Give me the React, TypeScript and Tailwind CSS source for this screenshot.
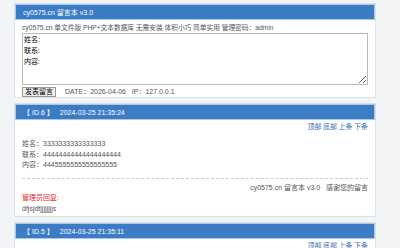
const FONT = { fontFamily: '"Liberation Sans", "Noto Sans CJK SC", sans-serif' }

type Entry = {
  id: number
  time: string
  name?: string
  contact?: string
  content?: string
  reply?: string
}

const entries: Entry[] = [
  {
    id: 6,
    time: '2024-03-25 21:35:24',
    name: '3333333333333333',
    contact: '44444444444444444444',
    content: '4445555555555555555',
    reply: 'dfjsjdfjjjjjjjjs',
  },
  { id: 5, time: '2024-03-25 21:35:11' },
]

function NavLinks() {
  return (
    <div className="flex justify-end gap-[1.5px] pr-[7px] pt-[1px] text-[#3b6db0]">
      <span>顶部</span>
      <span>底部</span>
      <span>上条</span>
      <span>下条</span>
    </div>
  )
}

function EntryCard({ entry }: { entry: Entry }) {
  return (
    <div className="mt-[5px] border border-[#dde1e6] bg-white">
      <div className="flex h-[16px] items-center gap-[6px] border border-[#a9c8ea] bg-[#3b7cc5] pl-[7px] text-white">
        <span>【 ID.{entry.id} 】</span>
        <span>{entry.time}</span>
      </div>
      <NavLinks />
      {entry.name !== undefined && (
        <div className="px-[7px] pb-[2px] leading-[10.5px]">
          <div className="pt-[7px] text-[#555]">
            <div>姓名：{entry.name}</div>
            <div>联系：{entry.contact}</div>
            <div>内容：{entry.content}</div>
          </div>
          <div className="mt-[7px] border-t border-dashed border-[#ccc]" />
          <div className="pt-[4px] text-right text-[#555]">
            cy0575.cn 留言本 v3.0&nbsp;&nbsp;&nbsp;感谢您的留言
          </div>
          <div className="text-[#e8262b]">管理员回复:</div>
          <div className="text-[#555]">{entry.reply}</div>
        </div>
      )}
    </div>
  )
}

export default function App() {
  return (
    <div className="h-[248px] overflow-hidden bg-[#f3f4f6] pt-[3px] text-[7px] leading-[11px]" style={FONT}>
      <div className="ml-[14px] w-[362px]">
        <div className="border border-[#dde1e6] bg-white">
          <div className="flex h-[16px] items-center border border-[#a9c8ea] bg-[#3b7cc5] pl-[7px] text-white">
            cy0575.cn 留言本 v3.0
          </div>
          <div className="px-[7px]">
            <div className="pt-[2px] text-[6.7px] text-[#555]">
              cy0575.cn 单文件版 PHP+文本数据库 无需安装 体积小巧 简单实用 管理密码：admin
            </div>
            <textarea
              className="block h-[52px] w-[346px] resize-y border border-[#bbb] px-[1px] text-[7px] leading-[11px] text-black outline-none"
              style={FONT}
              defaultValue={'姓名:\n联系:\n内容:'}
            />
            <div className="mt-[1px] flex items-center gap-[9px] text-[#555]">
              <button
                className="h-[10px] border border-[#999] bg-[#efefef] px-[2px] text-[7px] leading-[8px] text-black"
                style={FONT}
              >
                发表留言
              </button>
              <span>DATE：2026-04-06&nbsp;&nbsp;&nbsp;IP：127.0.0.1</span>
            </div>
          </div>
        </div>
        {entries.map(e => (
          <EntryCard key={e.id} entry={e} />
        ))}
      </div>
    </div>
  )
}
